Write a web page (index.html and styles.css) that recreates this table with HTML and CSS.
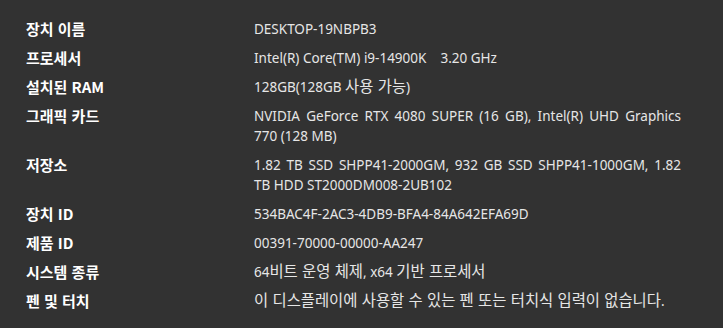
FILE: index.html
```html
<!DOCTYPE html>
<html lang="ko">
<head>
<meta charset="utf-8">
<link rel="stylesheet" href="styles.css">
</head>
<body>
<div class="specs">
  <div class="label">장치 이름</div><div class="value">DESKTOP-19NBPB3</div>
  <div class="label">프로세서</div><div class="value">Intel(R) Core(TM) i9-14900K&nbsp;&nbsp;&nbsp;&nbsp;3.20 GHz</div>
  <div class="label">설치된 RAM</div><div class="value">128GB(128GB <span class="ko">사용 가능</span>)</div>
  <div class="label">그래픽 카드</div><div class="value">NVIDIA GeForce RTX 4080 SUPER (16 GB), Intel(R) UHD Graphics 770 (128 MB)</div>
  <div class="label">저장소</div><div class="value">1.82 TB SSD SHPP41-2000GM, 932 GB SSD SHPP41-1000GM, 1.82 TB HDD ST2000DM008-2UB102</div>
  <div class="label">장치 ID</div><div class="value">534BAC4F-2AC3-4DB9-BFA4-84A642EFA69D</div>
  <div class="label">제품 ID</div><div class="value">00391-70000-00000-AA247</div>
  <div class="label">시스템 종류</div><div class="value">64<span class="ko">비트 운영 체제</span>, x64 <span class="ko">기반 프로세서</span></div>
  <div class="label">펜 및 터치</div><div class="value"><span class="ko">이 디스플레이에 사용할 수 있는 펜 또는 터치식 입력이 없습니다</span>.</div>
</div>
</body>
</html>
```

FILE: styles.css
```css
html, body {
  margin: 0;
  padding: 0;
  background: #323232;
}
body {
  font-family: "Noto Sans", "Noto Sans CJK KR", sans-serif;
  font-size: 13.5px;
  line-height: 20px;
}
.specs {
  display: grid;
  grid-template-columns: 228px 427px;
  row-gap: 9px;
  padding: 19px 0 0 26px;
}
.label {
  color: #ffffff;
  font-weight: 700;
  font-size: 15px;
  line-height: 20px;
  height: 20px;
  font-family: "Noto Sans CJK KR", sans-serif;
}
.value {
  color: #e6e6e6;
  text-align: justify;
  line-height: 20px;
}
.ko {
  font-family: "Noto Sans CJK KR", sans-serif;
  font-size: 15.4px;
  line-height: 1;
}
```
